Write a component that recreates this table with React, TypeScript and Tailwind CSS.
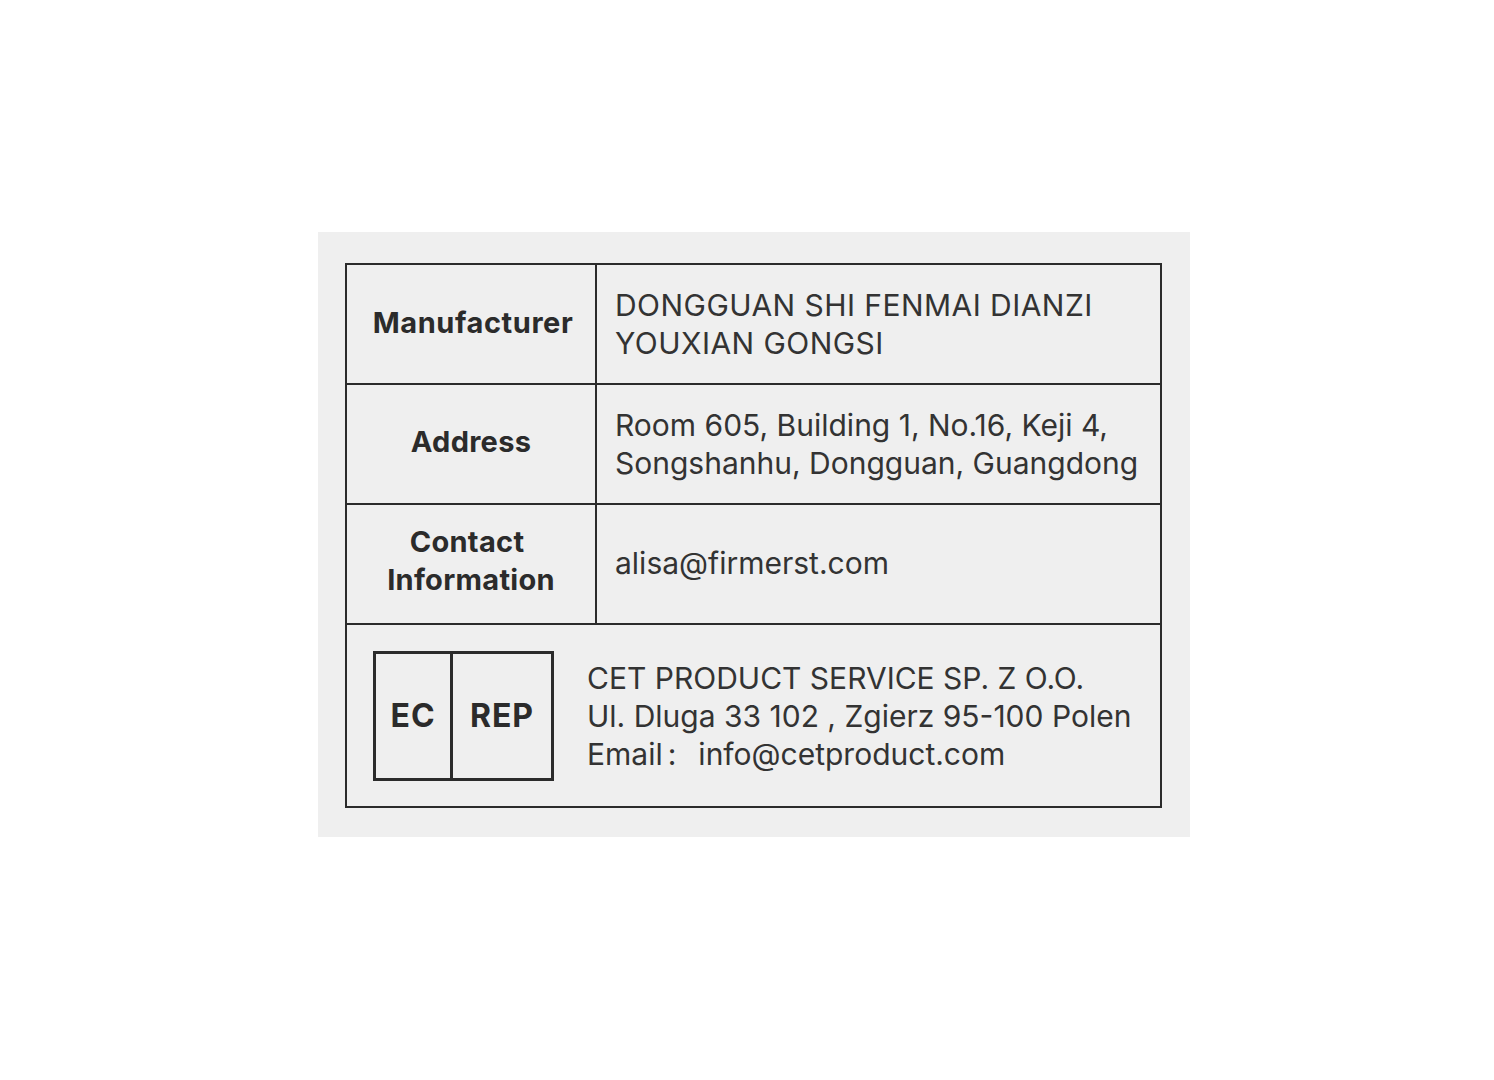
export default function App() {
  const font = { fontFamily: 'Inter, "Liberation Sans", sans-serif' }
  return (
    <div className="min-h-[1080px] w-full bg-white pt-[232px] pl-[318px]" style={font}>
      <div className="w-[872px] h-[605px] bg-[#efefef] pt-[31px] pl-[27px] pr-[28px] pb-[29px]">
        <div className="border-2 border-[#2b2b2b] text-[#2b2b2b] flex flex-col h-full">
          <div className="flex h-[120px] border-b-2 border-[#2b2b2b]">
            <div className="w-[250px] border-r-2 border-[#2b2b2b] flex items-center justify-center pl-[4px] pb-[2px] text-[29px] font-bold tracking-[0.02em]">
              Manufacturer
            </div>
            <div className="flex-1 flex flex-col justify-center pl-[18px] text-[30px] leading-[38px] tracking-[0.015em] text-[#333]">
              <span>DONGGUAN SHI FENMAI DIANZI</span>
              <span>YOUXIAN GONGSI</span>
            </div>
          </div>
          <div className="flex h-[120px] border-b-2 border-[#2b2b2b]">
            <div className="w-[250px] border-r-2 border-[#2b2b2b] flex items-center justify-center pb-[4px] text-[29px] font-bold tracking-[0.01em]">
              Address
            </div>
            <div className="flex-1 flex flex-col justify-center pl-[18px] text-[30px] leading-[38px] text-[#333]">
              <span>Room 605, Building 1, No.16, Keji 4,</span>
              <span>Songshanhu, Dongguan, Guangdong</span>
            </div>
          </div>
          <div className="flex h-[120px] border-b-2 border-[#2b2b2b]">
            <div className="w-[250px] border-r-2 border-[#2b2b2b] flex flex-col items-center justify-center pb-[6px] text-[29px] font-bold leading-[38px] tracking-[0.01em]">
              <span className="pr-[8px]">Contact</span>
              <span>Information</span>
            </div>
            <div className="flex-1 flex items-center pl-[18px] pb-[2px] text-[30px] text-[#333]">
              alisa@firmerst.com
            </div>
          </div>
          <div className="flex-1 flex items-center pl-[26px]">
            <div className="flex w-[181px] h-[130px] border-[3px] border-[#2b2b2b] text-[32px] font-bold tracking-[0.03em]">
              <div className="w-[77px] border-r-[3px] border-[#2b2b2b] flex items-center justify-center">EC</div>
              <div className="flex-1 flex items-center justify-center">REP</div>
            </div>
            <div className="ml-[33px] flex flex-col text-[30px] leading-[38px] text-[#333]">
              <span>CET PRODUCT SERVICE SP. Z O.O.</span>
              <span>Ul. Dluga 33 102 , Zgierz 95-100 Polen</span>
              <span>
                Email<span className="ml-[5px] mr-[22px]">:</span>info@cetproduct.com
              </span>
            </div>
          </div>
        </div>
      </div>
    </div>
  )
}
